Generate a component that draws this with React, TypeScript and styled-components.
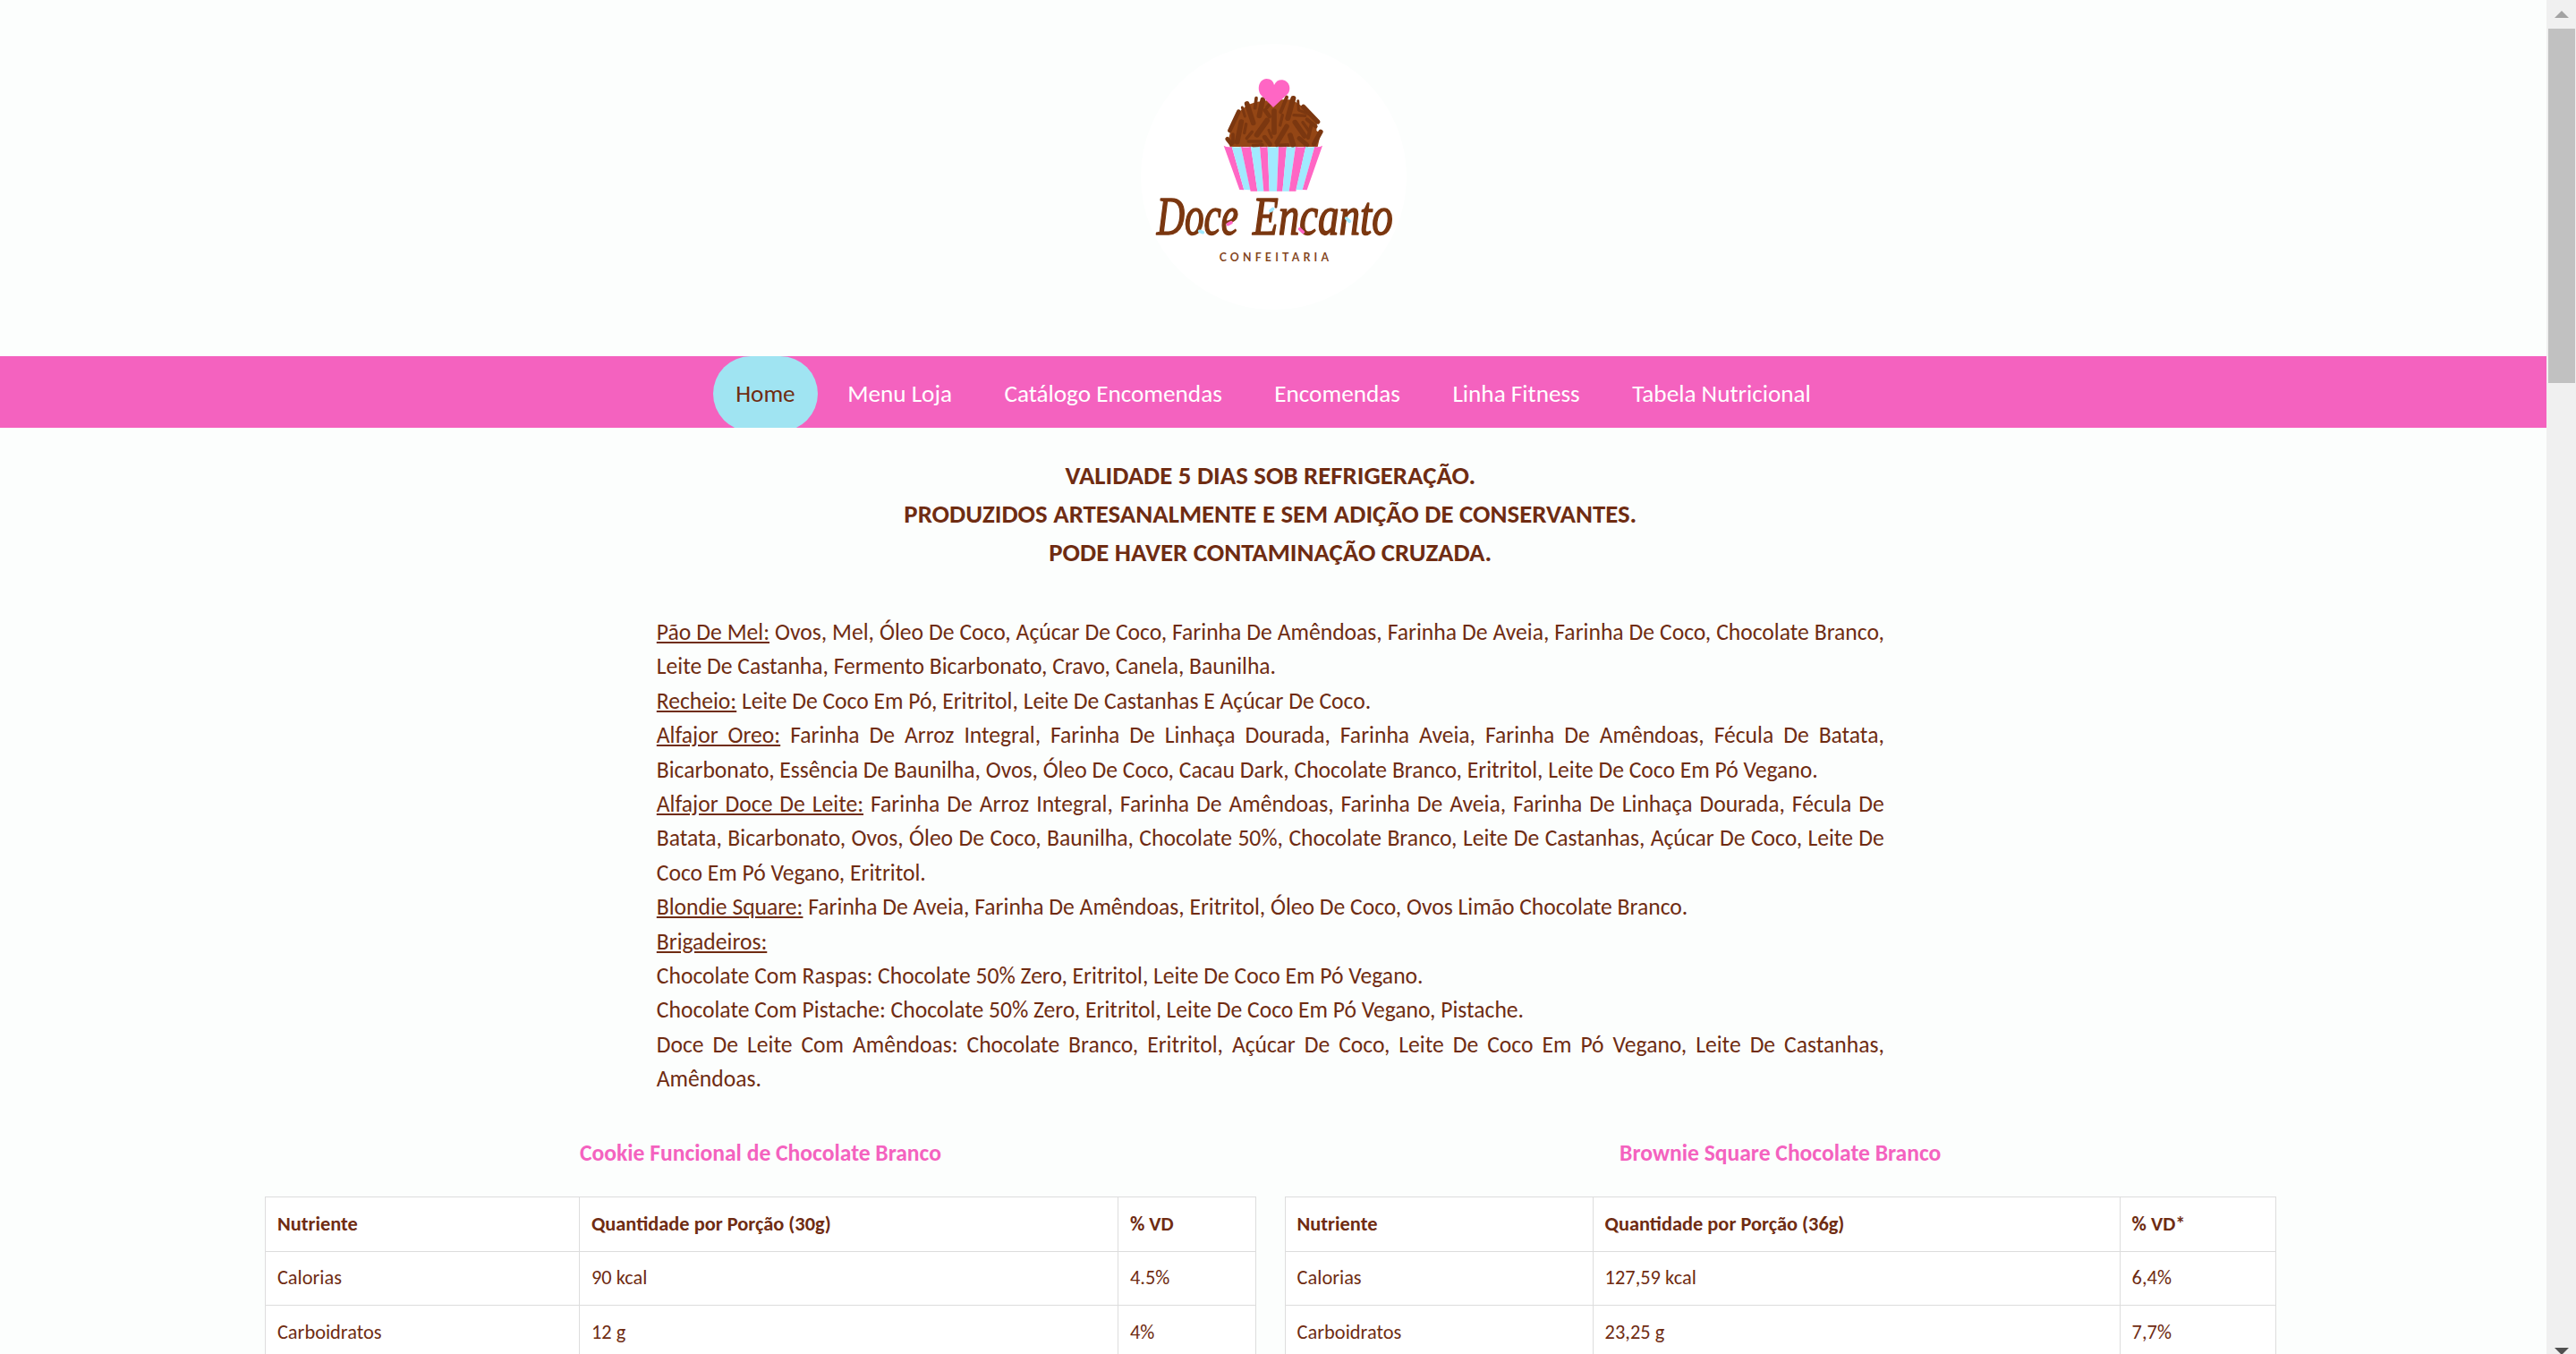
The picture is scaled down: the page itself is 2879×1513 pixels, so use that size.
import React from 'react';
import styled, { createGlobalStyle } from 'styled-components';

const BROWN = '#6f2c12';
const PINK = '#f462bf';
const BLUE = '#a0e4f2';

const GlobalStyle = createGlobalStyle`
  * { box-sizing: border-box; }
  html, body { margin: 0; padding: 0; height: 100%; overflow: hidden; }
  body {
    background: #fcfefd;
    color: ${BROWN};
    font-family: Calibri, Carlito, Lato, sans-serif;
    font-size: 25.6px;
    line-height: 1.5;
  }
`;

const Shell = styled.div`
  display: flex;
  height: 1513px;
  overflow: hidden;
`;

const Page = styled.div`
  flex: 1;
  min-width: 0;
  overflow: hidden;
`;

const Header = styled.header`
  display: flex;
  justify-content: center;
  height: 398px;
  padding-top: 49px;
`;

const LogoDisc = styled.div`
  width: 297px;
  height: 297px;
  border-radius: 50%;
  background: #fff;
`;

const LogoArt = styled.svg`
  display: block;
  overflow: visible;
`;

const NavBar = styled.nav`
  display: flex;
  justify-content: center;
  align-items: flex-start;
  gap: 7.3px;
  height: 80px;
  overflow: hidden;
  background: ${PINK};
`;

const NavLink = styled.a<{ $active?: boolean }>`
  flex: none;
  padding: 25px 25.6px 26.2px;
  border-radius: 50px;
  font-size: 27.2px;
  line-height: 33.2px;
  white-space: nowrap;
  color: ${p => (p.$active ? BROWN : '#fff')};
  background: ${p => (p.$active ? BLUE : 'transparent')};
`;

const Content = styled.main`
  display: flex;
  flex-direction: column;
  align-items: center;
  padding: 31.6px 6.4px 0 0;
`;

const Notice = styled.h2`
  margin: 0 0 48.8px;
  font-size: 28.8px;
  font-weight: 700;
  line-height: 43.2px;
  text-align: center;
`;

const Ingredients = styled.section`
  width: 1372px;
  margin-bottom: 44.4px;
  text-align: justify;
`;

const Item = styled.p`
  margin: 0;
`;

const Tables = styled.div`
  display: grid;
  grid-template-columns: 1fr 1fr;
  gap: 32px;
  width: 2247.4px;
`;

const Title = styled.h3`
  margin: 0 0 29.2px;
  color: ${PINK};
  font-size: 25.6px;
  font-weight: 700;
  text-align: center;
`;

const Table = styled.table`
  width: 100%;
  table-layout: fixed;
  border-collapse: collapse;
  background: #fff;
  font-size: 22.4px;
`;

const HeadCell = styled.th<{ $w?: number }>`
  width: ${p => (p.$w ? `${p.$w}px` : 'auto')};
  padding: 12.8px;
  border: 1px solid #ddd;
  text-align: left;
`;

const Cell = styled.td`
  padding: 12.8px;
  border: 1px solid #ddd;
`;

const Scrollbar = styled.div`
  display: flex;
  flex-direction: column;
  align-items: center;
  width: 33px;
  background: #f0f0f0;
`;

const ArrowBox = styled.div<{ $end?: boolean }>`
  display: flex;
  justify-content: center;
  flex: none;
  width: 33px;
  height: 32px;
  margin-top: ${p => (p.$end ? '1066px' : '0')};
  padding: ${p => (p.$end ? '11px' : '12px')} 0 0 1px;
`;

const Thumb = styled.div`
  flex: none;
  width: 30px;
  height: 396px;
  margin: 0 0 1px 1px;
  background: #c1c1c1;
`;

const links = ['Home', 'Menu Loja', 'Catálogo Encomendas', 'Encomendas', 'Linha Fitness', 'Tabela Nutricional'];

const ingredients: { name?: string; text: string }[] = [
  { name: 'Pão De Mel:', text: 'Ovos, Mel, Óleo De Coco, Açúcar De Coco, Farinha De Amêndoas, Farinha De Aveia, Farinha De Coco, Chocolate Branco, Leite De Castanha, Fermento Bicarbonato, Cravo, Canela, Baunilha.' },
  { name: 'Recheio:', text: 'Leite De Coco Em Pó, Eritritol, Leite De Castanhas E Açúcar De Coco.' },
  { name: 'Alfajor Oreo:', text: 'Farinha De Arroz Integral, Farinha De Linhaça Dourada, Farinha Aveia, Farinha De Amêndoas, Fécula De Batata, Bicarbonato, Essência De Baunilha, Ovos, Óleo De Coco, Cacau Dark, Chocolate Branco, Eritritol, Leite De Coco Em Pó Vegano.' },
  { name: 'Alfajor Doce De Leite:', text: 'Farinha De Arroz Integral, Farinha De Amêndoas, Farinha De Aveia, Farinha De Linhaça Dourada, Fécula De Batata, Bicarbonato, Ovos, Óleo De Coco, Baunilha, Chocolate 50%, Chocolate Branco, Leite De Castanhas, Açúcar De Coco, Leite De Coco Em Pó Vegano, Eritritol.' },
  { name: 'Blondie Square:', text: 'Farinha De Aveia, Farinha De Amêndoas, Eritritol, Óleo De Coco, Ovos Limão Chocolate Branco.' },
  { name: 'Brigadeiros:', text: '' },
  { text: 'Chocolate Com Raspas: Chocolate 50% Zero, Eritritol, Leite De Coco Em Pó Vegano.' },
  { text: 'Chocolate Com Pistache: Chocolate 50% Zero, Eritritol, Leite De Coco Em Pó Vegano, Pistache.' },
  { text: 'Doce De Leite Com Amêndoas: Chocolate Branco, Eritritol, Açúcar De Coco, Leite De Coco Em Pó Vegano, Leite De Castanhas, Amêndoas.' },
];

interface Nutrition {
  title: string;
  widths: [number, number];
  head: string[];
  rows: string[][];
}

const tables: Nutrition[] = [
  {
    title: 'Cookie Funcional de Chocolate Branco',
    widths: [351, 602],
    head: ['Nutriente', 'Quantidade por Porção (30g)', '% VD'],
    rows: [['Calorias', '90 kcal', '4.5%'], ['Carboidratos', '12 g', '4%']],
  },
  {
    title: 'Brownie Square Chocolate Branco',
    widths: [344, 589],
    head: ['Nutriente', 'Quantidade por Porção (36g)', '% VD*'],
    rows: [['Calorias', '127,59 kcal', '6,4%'], ['Carboidratos', '23,25 g', '7,7%']],
  },
];

// Chocolate sprinkles: x1, y1, x2, y2, thickness
const sprinkles: number[][] = [
  [371, 254, 341, 318, 14], [333, 346, 346, 362, 14], [380, 288, 366, 356, 17], [383, 240, 392, 270, 9],
  [399, 228, 420, 292, 17], [430, 209, 426, 242, 11], [452, 214, 440, 268, 17], [396, 296, 390, 326, 10],
  [416, 322, 398, 344, 10], [404, 354, 446, 354, 11], [466, 284, 432, 332, 18], [460, 250, 474, 270, 14],
  [490, 252, 490, 324, 17], [472, 316, 482, 340, 9], [458, 340, 476, 364, 15], [532, 304, 500, 358, 17],
  [518, 266, 510, 300, 10], [532, 206, 512, 256, 12], [554, 210, 536, 276, 18], [570, 218, 572, 248, 9],
  [588, 238, 636, 288, 16], [556, 266, 594, 268, 10], [574, 250, 606, 262, 9], [560, 290, 592, 336, 17],
  [544, 334, 554, 366, 18], [586, 290, 606, 318, 10], [616, 294, 604, 342, 12], [646, 322, 624, 362, 16],
  [574, 344, 600, 366, 15], [600, 280, 630, 304, 12], [500, 368, 536, 366, 12], [420, 368, 450, 366, 12],
  [476, 228, 466, 240, 12], [352, 330, 352, 360, 11],
];

// Wrapper stripes: colour, top-left, top-right, bottom-right, bottom-left
const stripes: [string, number, number, number, number][] = [
  ['#ff66c4', 321, 348, 389, 374], ['#a1eaff', 348, 379, 411, 389], ['#ff66c4', 379, 412, 434, 411],
  ['#a1eaff', 412, 442, 455, 434], ['#ff66c4', 442, 468, 474, 455], ['#a1eaff', 468, 505, 499, 474],
  ['#ff66c4', 505, 532, 518, 499], ['#a1eaff', 532, 562, 540, 518], ['#ff66c4', 562, 596, 563, 540],
  ['#a1eaff', 596, 626, 585, 563], ['#ff66c4', 626, 652, 600, 585],
];

const script = {
  fontFamily: '"Liberation Serif", serif',
  fontStyle: 'italic',
  fontWeight: 400,
  fill: '#7b3710',
  stroke: '#7b3710',
  strokeWidth: 5,
  strokeLinejoin: 'round' as const,
  lengthAdjust: 'spacingAndGlyphs',
};

function Logo() {
  return (
    <LogoArt width="297" height="297" viewBox="43 27 891 891" aria-label="Doce Encanto Confeitaria">
      <path d="M342 372 L336 350 L346 310 L372 256 L400 232 L430 222 L484 214 L550 214 L592 242 L634 290 L632 318 L646 328 L636 372 Z" fill="#944615" />
      <g stroke="#7b3710" strokeLinecap="round">
        {sprinkles.map(([x1, y1, x2, y2, w], i) => (
          <line key={i} x1={x1} y1={y1} x2={x2} y2={y2} strokeWidth={w} />
        ))}
      </g>
      {stripes.map(([c, a, b, d, e], i) => (
        <path key={i} fill={c} d={`M${a} ${i ? 371 : 368} Q${(a + b) / 2} 376 ${b} ${i === 10 ? 368 : 371} L${d} ${i < 2 || i > 8 ? 517 : 521} L${e} ${i < 2 || i > 8 ? 516 : 521} Z`} />
      ))}
      <path d="M487 240 L446 199 C432 180 438 146 464 144 C480 144 488 154 490 165 C496 152 506 147 518 148 C542 151 548 180 536 194 Z" fill="#ff66c4" />
      <text x="96" y="667" fontSize="182" textLength="274" {...script}>Doce</text>
      <text x="418" y="667" fontSize="182" textLength="470" {...script}>Encanto</text>
      <text x="306" y="757" fontSize="37" fontFamily="Lato, sans-serif" fontWeight="700" fill="#85471f" textLength="367" lengthAdjust="spacing">CONFEITARIA</text>
      <g strokeWidth="11" strokeLinecap="round">
        <line x1="335" y1="632" x2="346" y2="626" stroke="#ff66c4" />
        <line x1="576" y1="648" x2="587" y2="658" stroke="#ff66c4" />
        <line x1="240" y1="655" x2="251" y2="659" stroke="#a1eaff" />
        <line x1="478" y1="587" x2="486" y2="580" stroke="#a1eaff" />
        <line x1="732" y1="612" x2="743" y2="622" stroke="#a1eaff" />
      </g>
    </LogoArt>
  );
}

export default function App() {
  return (
    <>
      <GlobalStyle />
      <Shell>
        <Page>
          <Header>
            <LogoDisc><Logo /></LogoDisc>
          </Header>
          <NavBar>
            {links.map((l, i) => <NavLink key={l} $active={i === 0}>{l}</NavLink>)}
          </NavBar>
          <Content>
            <Notice>
              VALIDADE 5 DIAS SOB REFRIGERAÇÃO.<br />
              PRODUZIDOS ARTESANALMENTE E SEM ADIÇÃO DE CONSERVANTES.<br />
              PODE HAVER CONTAMINAÇÃO CRUZADA.
            </Notice>
            <Ingredients>
              {ingredients.map((it, i) => (
                <Item key={i}>{it.name && <u>{it.name}</u>} {it.text}</Item>
              ))}
            </Ingredients>
            <Tables>
              {tables.map(t => (
                <section key={t.title}>
                  <Title>{t.title}</Title>
                  <Table>
                    <thead>
                      <tr>{t.head.map((h, i) => <HeadCell key={h} $w={t.widths[i]}>{h}</HeadCell>)}</tr>
                    </thead>
                    <tbody>
                      {t.rows.map(r => <tr key={r[0]}>{r.map((c, i) => <Cell key={i}>{c}</Cell>)}</tr>)}
                    </tbody>
                  </Table>
                </section>
              ))}
            </Tables>
          </Content>
        </Page>
        <Scrollbar>
          <ArrowBox><svg width="16" height="8" viewBox="0 0 16 8"><path d="M0 8 L8 0 L16 8 Z" fill="#a3a3a3" /></svg></ArrowBox>
          <Thumb />
          <ArrowBox $end><svg width="16" height="8" viewBox="0 0 16 8"><path d="M0 0 L16 0 L8 8 Z" fill="#505050" /></svg></ArrowBox>
        </Scrollbar>
      </Shell>
    </>
  );
}
